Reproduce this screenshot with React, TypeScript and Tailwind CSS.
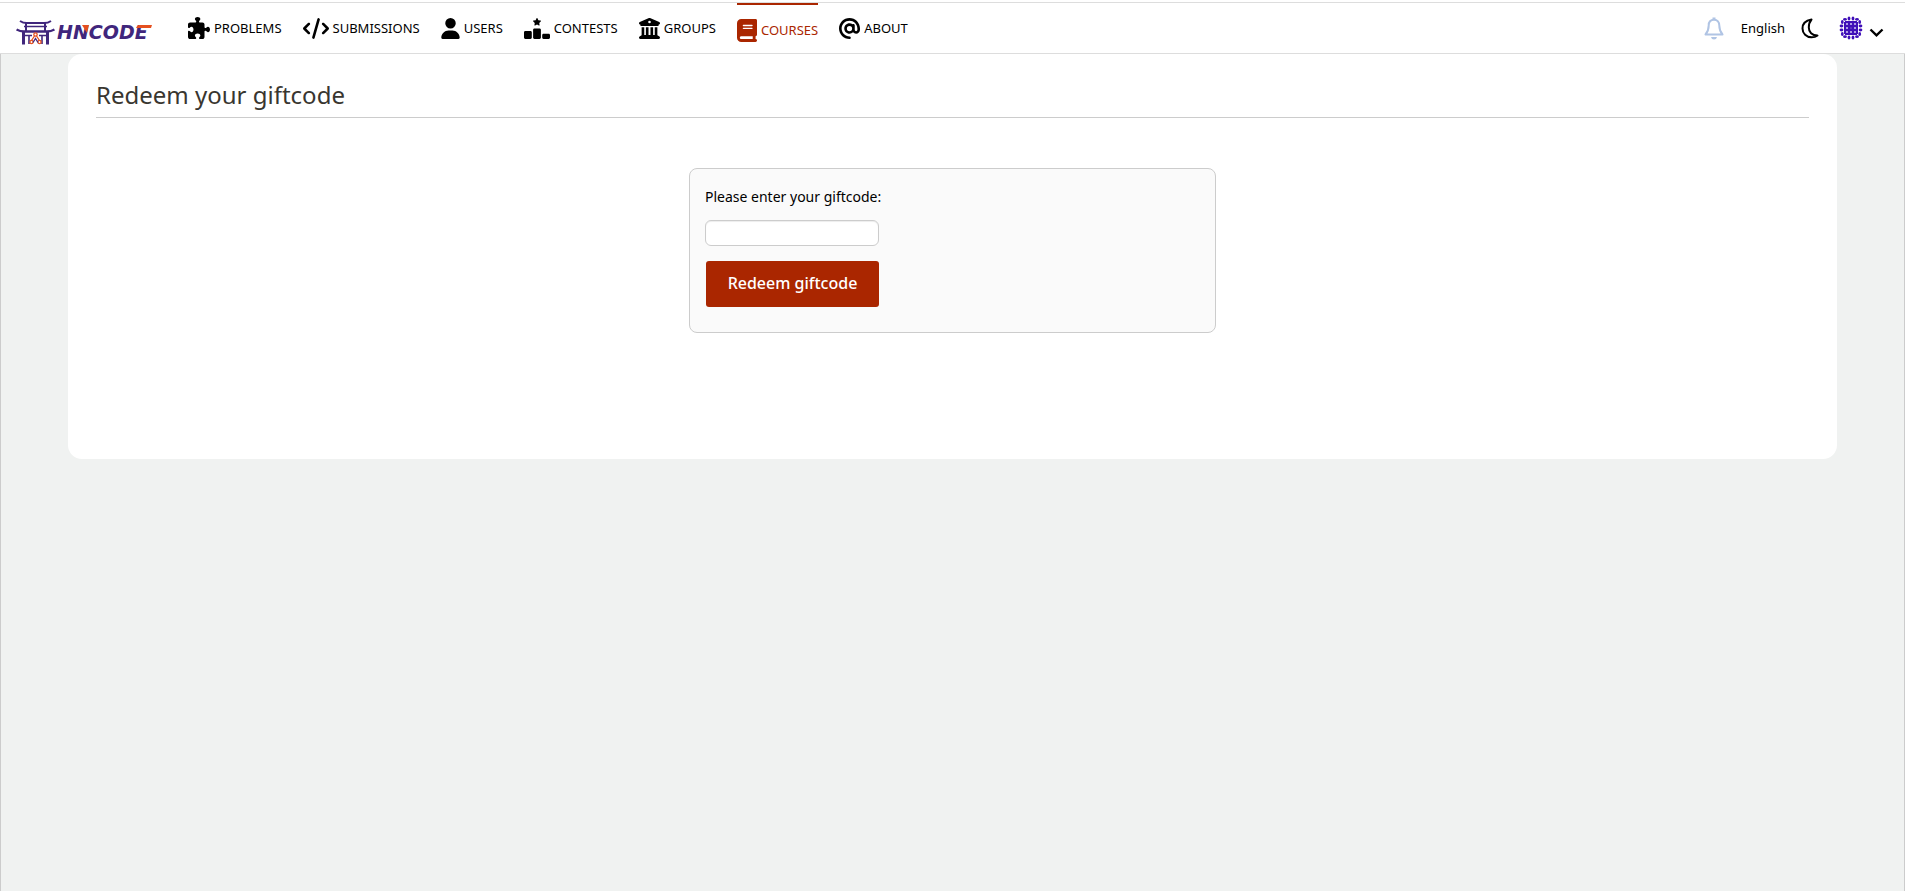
import React from 'react'
import type { FC } from 'react'
import type { IconType } from 'react-icons'
import {
    FaAt,
    FaBook,
    FaBuildingColumns,
    FaCode,
    FaPuzzlePiece,
    FaRankingStar,
    FaUser,
} from 'react-icons/fa6'

type NavItem = {
    label: string
    icon: IconType
    iconClass: string
    active?: boolean
}

const navItems: NavItem[] = [
    { label: 'PROBLEMS', icon: FaPuzzlePiece, iconClass: 'h-[22px] w-[22px]' },
    { label: 'SUBMISSIONS', icon: FaCode, iconClass: 'h-[21px] w-[26px]' },
    { label: 'USERS', icon: FaUser, iconClass: 'h-[21px] w-[19px]' },
    { label: 'CONTESTS', icon: FaRankingStar, iconClass: 'h-[21px] w-[26px]' },
    { label: 'GROUPS', icon: FaBuildingColumns, iconClass: 'h-[21px] w-[21px]' },
    { label: 'COURSES', icon: FaBook, iconClass: 'h-[23px] w-5', active: true },
    { label: 'ABOUT', icon: FaAt, iconClass: 'h-[21px] w-[21px]' },
]

const Logo: FC = () => (
    <span className="flex items-center gap-0.5">
        <svg width="39" height="25" viewBox="0 0 39 25" fill="none">
            <g stroke="#40267c">
                <path d="M4 1Q7 3 11 3H28Q32 3 35 1" strokeWidth="2" />
                <path d="M8 6.5H31" strokeWidth="1.5" />
                <path d="M0.500 9.500Q4 11.500 8 11.500H31Q35 11.500 38.500 9.500" strokeWidth="2.400" />
                <path d="M10 3V11M29 3V11" strokeWidth="2" />
                <path d="M7.500 12V24.500M31.500 12V24.500" strokeWidth="3" />
                <path d="M9 15.500H16M23 15.500H30M13 15.500V24M26 15.500V24" strokeWidth="1.600" />
            </g>
            <g stroke="#e5501f" strokeWidth="1.300">
                <circle cx="19.500" cy="14.500" r="1.700" />
                <path d="M18.500 16L15.500 20.500M20.500 16L23.500 20.500" />
                <circle cx="15.500" cy="22" r="1.600" />
                <circle cx="23.500" cy="22" r="1.600" />
            </g>
            <path d="M17 22.500L19.500 18.500L22 22.500" stroke="#40267c" strokeWidth="1.300" />
        </svg>
        <span className="relative font-['DejaVu_Sans',sans-serif] text-[19px] leading-6 font-bold text-[#40267c] italic">
            HNCODE
            <svg
                className="absolute top-0 left-0"
                width="96"
                height="24"
                viewBox="0 0 96 24"
                fill="#e5501f"
            >
                <path d="M25 5H32L30 13Z" />
                <path d="M82 5H95L94 8H79Q80 5 82 5Z" />
            </svg>
        </span>
    </span>
)

const Bell: FC = () => (
    <svg width="20" height="23" viewBox="0 0 20 23" fill="none">
        <path
            d="M10 2.800C6.500 2.800 4.700 5.300 4.700 8.500C4.700 13 3.700 14.800 1.500 17.500H18.500C16.300 14.800 15.300 13 15.300 8.500C15.300 5.300 13.500 2.800 10 2.800Z"
            stroke="#b0c4e4"
            strokeWidth="2"
            strokeLinejoin="round"
        />
        <path d="M8.500 0.500H11.500V3H8.500ZM7 20H13Q12.500 22.500 10 22.500Q7.500 22.500 7 20Z" fill="#b0c4e4" />
    </svg>
)

const Moon: FC = () => (
    <svg width="18" height="21" viewBox="0 0 18 21" fill="none">
        <path
            d="M10.500 1.500C4.500 2.500 1.500 6 1.500 10.500C1.500 15.500 5.500 19.300 10.500 19.300C13 19.300 15 18.700 16.500 17.500C11 17.500 7.800 14 7.800 9.500C7.800 6 8.800 3.500 10.500 1.500Z"
            stroke="#000"
            strokeWidth="2"
            strokeLinejoin="round"
        />
    </svg>
)

const Avatar: FC = () => (
    <svg width="24" height="24" viewBox="0 0 24 24" fill="#4010b8">
        <path d="M6 5H18V6H19V18H18V19H6V18H5V6H6Z" />
        <g fill="#c9bdf0">
            {[8, 12, 16].map((y) =>
                [8, 12, 16].map((x) => (
                    <circle key={`${x}-${y}`} cx={x} cy={y} r={x === 12 && y === 12 ? 0.5 : 1.1} />
                ))
            )}
        </g>
        {[0, 90, 180, 270].map((angle) => (
            <g key={angle} transform={`rotate(${angle} 12 12)`}>
                <ellipse cx="6" cy="3.300" rx="1.900" ry="1.400" />
                <ellipse cx="10" cy="2.500" rx="1.400" ry="1.900" />
                <ellipse cx="14" cy="2.500" rx="1.400" ry="1.900" />
                <ellipse cx="18" cy="3.300" rx="1.900" ry="1.400" />
            </g>
        ))}
    </svg>
)

const Header: FC = () => (
    <header className="mt-0.5 flex h-[52px] justify-between border-y border-[#ddd] bg-white pr-[21px] pl-4 text-[13px] leading-[18px]">
        <nav className="flex">
            <a href="#" aria-label="HNCODE" className="mr-9 flex w-[136px] items-center pt-2">
                <Logo />
            </a>
            <ul className="flex gap-[21px]">
                {navItems.map(({ label, icon: Icon, iconClass, active }) => (
                    <li key={label}>
                        <a
                            href="#"
                            className={
                                active
                                    ? 'flex h-full items-center gap-1 border-t-2 border-[#aa2600] pt-0.5 text-[#aa2600]'
                                    : 'flex h-full items-center gap-1 text-black'
                            }
                        >
                            <Icon className={iconClass} />
                            {label}
                        </a>
                    </li>
                ))}
            </ul>
        </nav>
        <div className="flex items-center">
            <button type="button" aria-label="Notifications" className="mr-[17px]">
                <Bell />
            </button>
            <button type="button" className="mr-4">
                English
            </button>
            <button type="button" aria-label="Dark mode" className="mr-5">
                <Moon />
            </button>
            <button type="button" aria-label="Account" className="flex items-center gap-1.5">
                <Avatar />
                <svg className="mt-2" width="15" height="9" viewBox="0 0 15 9" fill="none">
                    <path d="M1.500 1.500L7.500 7.300L13.500 1.500" stroke="#000" strokeWidth="2.400" />
                </svg>
            </button>
        </div>
    </header>
)

const App: FC = () => {
    return (
        <div className="flex min-h-screen flex-col bg-white font-['Noto_Sans',sans-serif] text-black">
            <Header />
            <div className="grow border-x border-[#ccc] bg-[#f0f2f1] px-[67px]">
                <main className="rounded-[14px] bg-white px-7 pt-6 pb-[126px]">
                    <h1 className="border-b border-[#ccc] pb-1.5 text-2xl leading-[33px] text-[#393630]">
                        Redeem your giftcode
                    </h1>
                    <form className="mx-auto mt-[50px] w-[527px] rounded-lg border border-[#ccc] bg-[#fafafa] px-[15px] pt-[18px] pb-[25px]">
                        <label htmlFor="giftcode" className="block text-sm leading-5">
                            Please enter your giftcode:
                        </label>
                        <input
                            id="giftcode"
                            type="text"
                            className="mt-[13px] block h-[26px] w-[174px] rounded-md border border-[#ccc] bg-white px-2 text-sm shadow-[inset_0_1px_1px_rgba(0,0,0,0.075)]"
                        />
                        <button
                            type="submit"
                            className="mt-[15px] ml-px block h-[46px] w-[173px] rounded-[3px] bg-[#aa2600] pb-0.5 text-base font-medium text-white"
                        >
                            Redeem giftcode
                        </button>
                    </form>
                </main>
            </div>
        </div>
    )
}

export default App
